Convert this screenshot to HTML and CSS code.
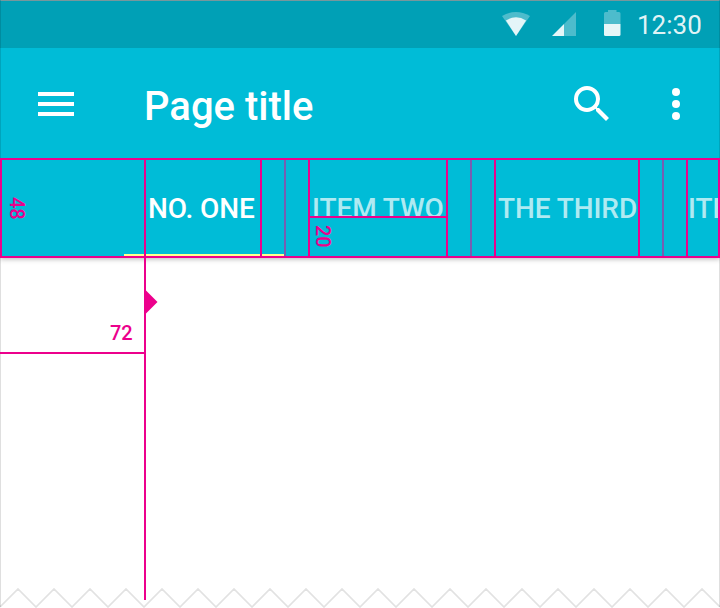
FILE: index.html
```html
<!DOCTYPE html>
<html lang="en">
<head>
<meta charset="utf-8">
<title>Page title</title>
<link rel="stylesheet" href="styles.css">
</head>
<body>
<div class="screen">
  <header class="header">
    <div class="status">
      <svg class="wifi" width="28" height="26" viewBox="0 0 28 26"><path d="M0 6Q14 -2 28 6L14 26z" fill="#fff" fill-opacity=".3"/><path d="M3.900 10.600Q14 4 24.100 10.600L14 26z" fill="#fff" fill-opacity=".85"/></svg>
      <svg class="signal" width="24" height="24" viewBox="0 0 24 24"><path d="M12 12L24 0V24H12z" fill="#fff" fill-opacity=".3"/><path d="M0 24L12 12V24z" fill="#fff" fill-opacity=".9"/></svg>
      <svg class="battery" width="17" height="26" viewBox="0 0 17 26"><path d="M0 14V3.500Q0 2 1.500 2H4V0H12.500V2H15Q16.500 2 16.500 3.500V14z" fill="#fff" fill-opacity=".3"/><path d="M0 14H16.500V24.500Q16.500 26 15 26H1.500Q0 26 0 24.500z" fill="#fff" fill-opacity=".9"/></svg>
      <span class="time">12:30</span>
    </div>
    <div class="toolbar">
      <svg class="icon" viewBox="0 0 24 24"><path d="M3 18h18v-2H3v2zm0-5h18v-2H3v2zm0-7v2h18V6H3z"/></svg>
      <h1 class="title">Page title</h1>
      <svg class="icon search" viewBox="0 0 24 24"><path d="M15.500 14h-.790l-.280-.270A6.471 6.471 0 0 0 16 9.500 6.500 6.500 0 1 0 9.500 16c1.610 0 3.090-.590 4.230-1.570l.270.280v.790l5 4.990L20.490 19l-4.990-5zm-6 0C7.010 14 5 11.990 5 9.500S7.010 5 9.500 5 14 7.010 14 9.500 11.990 14 9.500 14z"/></svg>
      <svg class="icon more" viewBox="0 0 24 24"><circle cx="12" cy="6" r="2"/><circle cx="12" cy="12" r="2"/><circle cx="12" cy="18" r="2"/></svg>
    </div>
    <nav class="tabs">
      <span class="tab active">NO. ONE</span>
      <span class="tab two">ITEM TWO</span>
      <span class="tab three">THE THIRD</span>
      <span class="tab four">ITE</span>
    </nav>
  </header>
  <main class="content"></main>
  <svg class="tear" width="720" height="20" viewBox="0 0 720 20"><path d="M0 19l18-18 18 18 18-18 18 18 18-18 18 18 18-18 18 18 18-18 18 18 18-18 18 18 18-18 18 18 18-18 18 18 18-18 18 18 18-18 18 18 18-18 18 18 18-18 18 18 18-18 18 18 18-18 18 18 18-18 18 18 18-18 18 18 18-18 18 18 18-18 18 18 18-18 18 18 18-18 18 18"/></svg>
  <div class="frame"></div>
  <svg class="guides" width="720" height="608" viewBox="0 0 720 608">
    <g class="soft"><path d="M285 160V256M471 160V256M663 160V256"/></g>
    <g class="line"><path d="M1 159H719V257H1zM145 159V600M261 159V257M309 159V257M447 159V257M495 159V257M639 159V257M687 159V257M309 217H447M0 353H145"/></g>
    <path class="marker" d="M146 290.500L157.500 302L146 313.500z"/>
  </svg>
  <span class="measure height">48</span>
  <span class="measure baseline">20</span>
  <span class="measure keyline">72</span>
</div>
</body>
</html>
```
FILE: styles.css
```css
* { box-sizing: border-box; }
body {
  margin: 0;
  font-family: Roboto, "Liberation Sans", sans-serif;
  background: #fff;
}
.screen {
  position: relative;
  display: flex;
  flex-direction: column;
  width: 720px;
  height: 608px;
  overflow: hidden;
}
.header {
  flex: none;
  height: 258px;
  background: #00bcd7;
  color: #fff;
  box-shadow: 0 1px 5px rgba(0, 0, 0, .3);
}
.status {
  display: flex;
  align-items: flex-end;
  height: 48px;
  padding: 0 17px 12px 502px;
  background: #00a0b6;
}
.wifi, .signal, .battery { flex: none; }
.signal { margin-left: 22px; }
.battery { margin-left: 28px; }
.time {
  margin: 0 0 -1px 16px;
  font-size: 26px;
  line-height: 24px;
  color: rgba(255, 255, 255, .9);
  white-space: nowrap;
}
.toolbar {
  display: flex;
  align-items: center;
  height: 110px;
  padding: 0 20px 0 32px;
}
.icon { flex: none; width: 48px; height: 48px; fill: #fff; margin-top: 2px; }
.title {
  flex: 1;
  margin: 8px 0 0 64px;
  font-size: 40px;
  font-weight: 500;
  line-height: 48px;
}
.more { margin-left: 36px; }
.tabs {
  display: flex;
  height: 100px;
  padding-left: 124px;
  overflow: hidden;
}
.tab {
  flex: none;
  width: 160px;
  height: 98px;
  padding-left: 24px;
  font-size: 28px;
  font-weight: 500;
  line-height: 101px;
  letter-spacing: -.08px;
  white-space: nowrap;
  color: rgba(255, 255, 255, .7);
}
.tab.active { color: #fff; border-bottom: 2px solid #ffff8d; }
.two { width: 186px; padding-left: 28px; }
.three { width: 192px; padding-left: 28px; }
.four { width: 58px; padding-left: 26px; }
.content { flex: 1; }
.tear { flex: none; fill: none; stroke: #e2e2e2; stroke-width: 1.700; }
.frame {
  position: absolute;
  top: 0;
  left: 0;
  width: 720px;
  height: 607px;
  border: 1px solid rgba(0, 0, 0, .13);
  border-top-color: rgba(150, 150, 150, .8);
  border-bottom: 0;
}
.guides { position: absolute; top: 0; left: 0; }
.line { fill: none; stroke: #ec008c; stroke-width: 2; }
.soft { fill: none; stroke: #765eb2; stroke-width: 2; }
.marker { fill: #ec008c; }
.measure {
  position: absolute;
  font-size: 20px;
  font-weight: 500;
  line-height: 24px;
  color: #ec008c;
}
.height { top: 197px; left: 5px; writing-mode: vertical-rl; }
.baseline { top: 225px; left: 311px; writing-mode: vertical-rl; }
.keyline { top: 321px; left: 110px; }
```
